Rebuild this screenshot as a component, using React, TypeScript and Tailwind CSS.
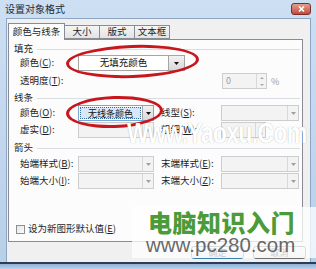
import type { ReactNode } from "react";

const font = { fontFamily: '"Noto Sans CJK SC", "Liberation Sans", sans-serif' };

function Acc({ k }: { k: string }) {
  return (
    <span>
      (<span className="underline">{k}</span>):
    </span>
  );
}

function Label({ text, k, w }: { text: string; k: string; w: string }) {
  return (
    <div className={`${w} shrink-0 whitespace-nowrap text-[9.5px] leading-none text-[#1e1e1e]`}>
      {text}
      <Acc k={k} />
    </div>
  );
}

function Arrow({ dark }: { dark?: boolean }) {
  return (
    <svg width="5" height="3" viewBox="0 0 5 3">
      <path d="M0 0h5L2.5 3z" fill={dark ? "#111" : "#a0a0a0"} />
    </svg>
  );
}

function DisabledSelect({ w }: { w: string }) {
  return (
    <div className={`${w} h-full shrink-0 flex border border-[#cdcdcd] bg-[#f3f3f3]`}>
      <div className="flex-1" />
      <div className="w-[11px] border-l border-[#d8d8d8] flex items-center justify-center">
        <Arrow />
      </div>
    </div>
  );
}

function Spin({ value }: { value?: string }) {
  return (
    <div className="w-[45px] h-full shrink-0 flex border border-[#cdcdcd] bg-[#f3f3f3]">
      <div className="flex-1 pl-[3px] text-[9px] leading-[13px] text-[#9a9a9a]">{value}</div>
      <div className="w-[10px] border-l border-[#d8d8d8] flex flex-col items-center justify-around">
        <svg width="4" height="2" viewBox="0 0 4 2">
          <path d="M0 2h4L2 0z" fill="#a8a8a8" />
        </svg>
        <svg width="4" height="2" viewBox="0 0 4 2">
          <path d="M0 0h4L2 2z" fill="#a8a8a8" />
        </svg>
      </div>
    </div>
  );
}

function Section({ title, className }: { title: string; className: string }) {
  return (
    <div className={`${className} h-[12px] flex items-center pl-[5px] pr-[2px]`}>
      <span className="text-[9.5px] leading-none text-[#1e1e1e]">{title}</span>
      <div className="ml-[4px] flex-1 h-px bg-[#d9dde2]" />
    </div>
  );
}

function Row({ className, children }: { className: string; children: ReactNode }) {
  return <div className={`${className} h-[16px] flex items-center pl-[11px]`}>{children}</div>;
}

export default function App() {
  return (
    <div
      className="relative w-[316px] h-[269px] overflow-hidden flex flex-col bg-gradient-to-b from-[#cddff2] to-[#b8cfe8]"
      style={font}
    >
      {/* title bar */}
      <div className="h-[18px] shrink-0 flex items-center justify-between pl-[5px] pr-[5px]">
        <span className="text-[10px] leading-none text-[#1b2a3d]">设置对象格式</span>
        <div className="w-[20px] h-[12px] rounded-[3px] border border-[#7a2f2f] bg-gradient-to-b from-[#e3a08f] to-[#c2483a] flex items-center justify-center">
          <svg width="7" height="6" viewBox="0 0 7 6">
            <path d="M1 0.5l5 5M6 0.5l-5 5" stroke="#fff" strokeWidth="1.6" />
          </svg>
        </div>
      </div>

      {/* dialog body */}
      <div className="h-[244px] shrink-0 ml-[6px] mr-[5px] flex flex-col bg-[#f0f0f0] border-x border-t border-[#8ea6c4]">
        {/* tabs */}
        <div className="mt-[3px] h-[17px] pl-[1px] flex items-end text-[9.5px] leading-none text-[#1e1e1e]">
          <div className="relative z-10 w-[57px] h-[17px] -mb-px flex items-center justify-center border border-b-0 border-[#898c95] bg-[#fcfcfc]">
            颜色与线条
          </div>
          <div className="w-[35px] h-[14px] flex items-center justify-center border border-l-0 border-[#898c95] bg-gradient-to-b from-[#f5f5f5] to-[#e3e3e3]">
            大小
          </div>
          <div className="w-[35px] h-[14px] flex items-center justify-center border border-l-0 border-[#898c95] bg-gradient-to-b from-[#f5f5f5] to-[#e3e3e3]">
            版式
          </div>
          <div className="w-[35px] h-[14px] flex items-center justify-center border border-l-0 border-[#898c95] bg-gradient-to-b from-[#f5f5f5] to-[#e3e3e3]">
            文本框
          </div>
        </div>

        {/* panel */}
        <div className="ml-[1px] w-[295px] h-[203px] flex flex-col border border-[#898c95] bg-[#fcfcfc] pt-[3px]">
          <Section title="填充" className="mt-0" />
          <Row className="mt-0">
            <Label text="颜色" k="C" w="w-[58px]" />
            <div className="w-[107px] h-full flex border border-[#a5a5a5] bg-white">
              <div className="flex-1 flex items-center justify-center text-[9.5px] leading-none text-[#111]">
                无填充颜色
              </div>
              <div className="w-[16px] border-l border-[#a5a5a5] bg-gradient-to-b from-[#f2f2f2] to-[#d9d9d9] flex items-center justify-center">
                <Arrow dark />
              </div>
            </div>
          </Row>
          <Row className="mt-[2px]">
            <Label text="透明度" k="T" w="w-[202px]" />
            <Spin value="0" />
            <span className="ml-[4px] text-[9px] leading-none text-[#9a9a9a]">%</span>
          </Row>

          <Section title="线条" className="mt-[3px]" />
          <Row className="mt-[1px]">
            <Label text="颜色" k="O" w="w-[58px]" />
            <div className="w-[76px] h-full shrink-0 flex border border-[#7aa7d1] bg-white">
              <div className="flex-1 m-px flex items-center justify-center border border-dotted border-[#3d6fa0] bg-[#d6e8fa] text-[9px] leading-none text-[#111]">
                无线条颜色
              </div>
              <div className="w-[11px] border-l border-[#a5a5a5] bg-gradient-to-b from-[#f2f2f2] to-[#d9d9d9] flex items-center justify-center">
                <Arrow dark />
              </div>
            </div>
            <div className="w-[7px] shrink-0" />
            <Label text="线型" k="S" w="w-[60px]" />
            <DisabledSelect w="w-[78px]" />
          </Row>
          <Row className="mt-[1px]">
            <Label text="虚实" k="D" w="w-[58px]" />
            <DisabledSelect w="w-[76px]" />
            <div className="w-[7px] shrink-0" />
            <Label text="粗细" k="W" w="w-[60px]" />
            <Spin />
          </Row>

          <Section title="箭头" className="mt-[4px]" />
          <Row className="mt-[2px]">
            <Label text="始端样式" k="B" w="w-[58px]" />
            <DisabledSelect w="w-[76px]" />
            <div className="w-[7px] shrink-0" />
            <Label text="末端样式" k="E" w="w-[60px]" />
            <DisabledSelect w="w-[78px]" />
          </Row>
          <Row className="mt-[1px]">
            <Label text="始端大小" k="I" w="w-[58px]" />
            <DisabledSelect w="w-[76px]" />
            <div className="w-[7px] shrink-0" />
            <Label text="末端大小" k="Z" w="w-[60px]" />
            <DisabledSelect w="w-[78px]" />
          </Row>

          <div className="mt-[34px] h-[12px] flex items-center pl-[7px]">
            <div className="w-[9px] h-[9px] border border-[#8f8f8f] bg-gradient-to-br from-[#e6e6e6] to-[#fbfbfb]" />
            <span className="ml-[3px] text-[9.5px] leading-none text-[#1e1e1e]">
              设为新图形默认值(<span className="underline">E</span>)
            </span>
          </div>
        </div>

        {/* buttons */}
        <div className="mt-[4px] h-[13px] flex justify-end gap-[9px] pr-[4px]">
          <div className="w-[53px] h-full rounded-[3px] border border-[#3c7fb1] bg-gradient-to-b from-[#f2f2f2] to-[#d4e3f0] flex items-center justify-center text-[9px] leading-none text-[#1e1e1e]">
            确定
          </div>
          <div className="w-[53px] h-full rounded-[3px] border border-[#707070] bg-gradient-to-b from-[#f2f2f2] to-[#dcdcdc] flex items-center justify-center text-[9px] leading-none text-[#1e1e1e]">
            取消
          </div>
        </div>
      </div>

      {/* bottom frame */}
      <div className="flex-1 border-t-2 border-[#2d3e52] bg-gradient-to-b from-[#8fb0d6] to-[#bcd3ec]" />

      {/* hand-drawn red marks */}
      <div className="absolute left-[66px] top-[45px] w-[133px] h-[33px] rounded-[50%] border-[3px] border-[#c8161d] -rotate-2" />
      <div className="absolute left-[66px] top-[96px] w-[97px] h-[32px] rounded-[50%] border-[3px] border-[#c8161d] -rotate-2" />

      {/* watermarks */}
      <div
        className="absolute left-[127px] top-[119px] text-[29px] font-bold leading-none tracking-[-1px] text-white whitespace-nowrap origin-left scale-x-[0.8] [text-shadow:0_0_1px_rgba(0,0,0,0.35)]"
        style={{ fontFamily: '"Liberation Sans", sans-serif' }}
      >
        Www.Yaoxu.Com
      </div>
      <div className="absolute left-[132px] top-[207px] w-[184px] h-[51px] bg-white/75" />
      <div className="absolute left-[148px] top-[210px] text-[24px] font-black leading-none tracking-[0.5px] text-[#4c9b3a] whitespace-nowrap [text-shadow:0_0_1px_rgba(255,255,255,0.9)]">
        电脑知识入门
      </div>
      <div
        className="absolute left-[146px] top-[235px] text-[20.5px] leading-none text-[#555]/90 whitespace-nowrap"
        style={{ fontFamily: '"Liberation Sans", sans-serif' }}
      >
        www.pc280.com
      </div>
    </div>
  );
}
